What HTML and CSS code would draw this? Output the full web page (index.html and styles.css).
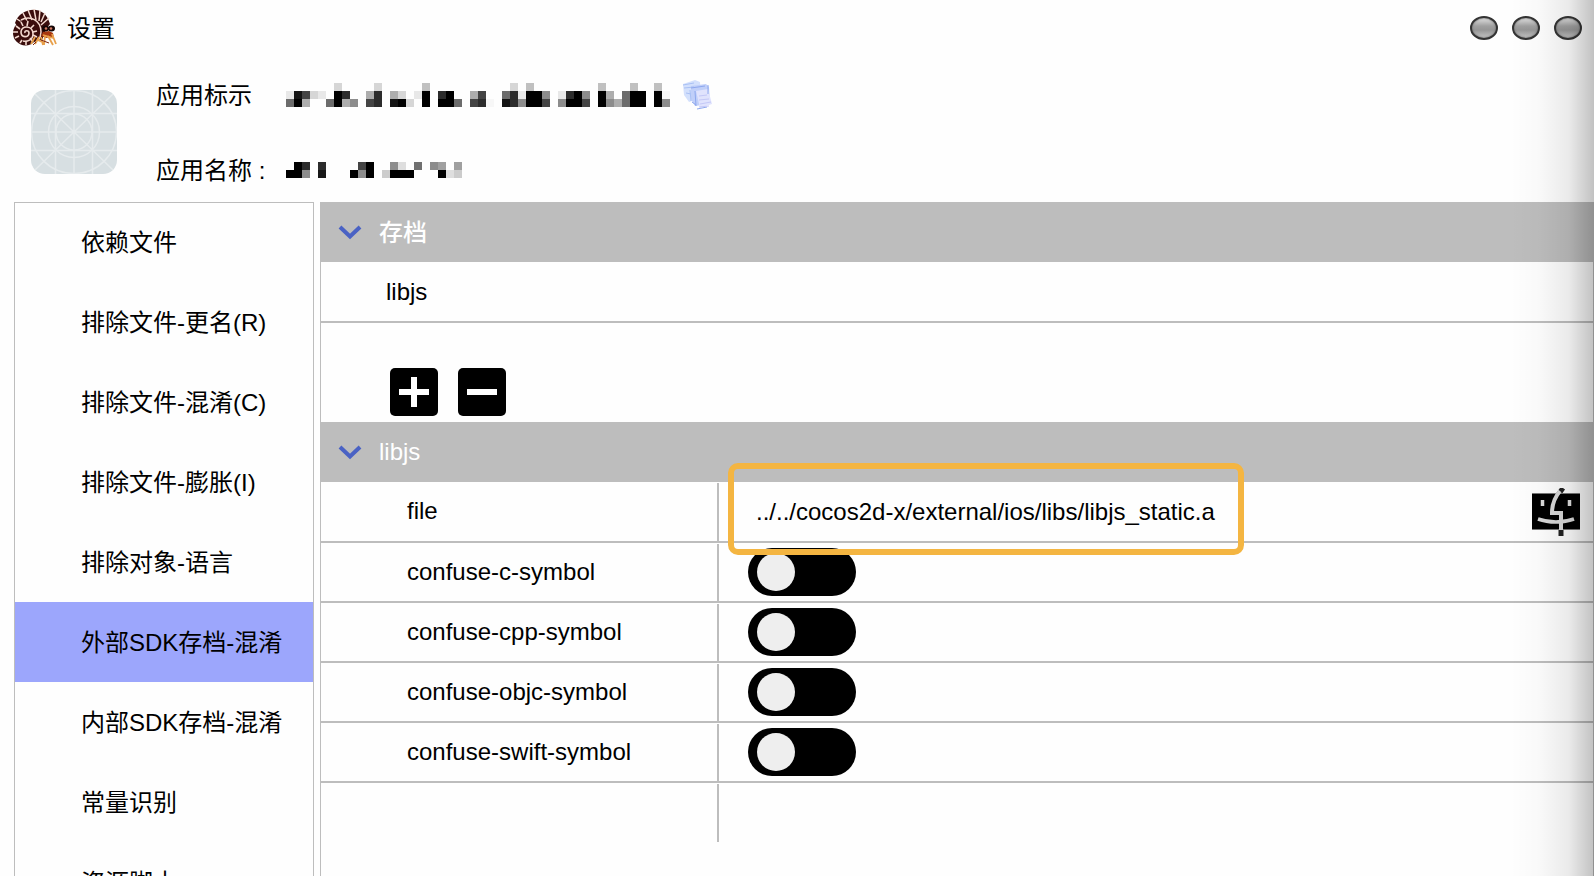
FILE: index.html
```html
<!DOCTYPE html>
<html lang="zh-CN">
<head>
<meta charset="utf-8">
<title>设置</title>
<meta name="viewport" content="width=device-width, initial-scale=1">
<link rel="stylesheet" href="styles.css">
</head>
<body>
<div class="window">
  <header class="titlebar">
    <svg class="logo" viewBox="0 0 44 38" aria-hidden="true">
      <path d="M2 14C5 5 14 0 23 1c8 1 12 7 14 14l-4 5-4 11-12 3z" fill="#3a0d0c"/>
      <g stroke="#f3d9cf" stroke-width="1.5" fill="none">
        <path d="M10 4l4 8M15 1l4 10M21 0l2 11M27 1l-1 11M32 4l-4 9M36 9l-8 7M4 10l6 4"/>
        <path d="M8 11c9-5 20 0 20 12 0 3-1 6-3 9"/>
      </g>
      <circle cx="12.500" cy="24" r="12.500" fill="#3a0d0c"/>
      <g stroke="#f3d9cf" stroke-width="1.600" fill="none">
        <path d="M12 24c-1-3 4-3 4 0 0 5-8 5-8-1 0-7 12-7 12 2 0 6-6 8-10 7"/>
        <path d="M3 17l4 3M8 13l2 4M15 12l-1 5M21 16l-3 3M24 22l-4 1M24 28l-4-2M20 33l-3-4M13 36v-4M7 34l2-3M2 29l4-2M0 23h5"/>
      </g>
      <path d="M30 23l6-1 4 2 1 5-4-1-4 1-5-2z" fill="#a8380f"/>
      <path d="M22 28l-4 7M26 28l-4 7M28 28l2 8M32 27l-1 9M35 27l5 9M39 25l4 10M25 31l6 3M30 26l10 3" stroke="#e8a04a" stroke-width="1.800" fill="none"/>
      <path d="M20 36l3-3M28 31l8 3" stroke="#7d2510" stroke-width="1"/>
      <ellipse cx="32.500" cy="19.500" rx="3.500" ry="3" fill="#140505"/>
      <ellipse cx="38.500" cy="19.500" rx="3.500" ry="3" fill="#140505"/>
      <circle cx="33" cy="19.500" r="1.300" fill="#d07a62"/>
      <circle cx="38" cy="19.500" r="1.300" fill="#d07a62"/>
    </svg>
    <h1 class="title">设置</h1>
    <div class="window-controls">
      <button class="orb" type="button" aria-label="最小化"></button>
      <button class="orb" type="button" aria-label="最大化"></button>
      <button class="orb" type="button" aria-label="关闭"></button>
    </div>
  </header>

  <section class="app-info">
    <svg class="app-icon" viewBox="0 0 86 84" aria-hidden="true">
      <rect width="86" height="84" rx="14" fill="#d7dfe2"/>
      <g fill="none" stroke="#e6ebed" stroke-width="1.500">
        <path d="M24.500 0v84M43 0v84M61.500 0v84M0 23.500h86M0 42h86M0 60.500h86M4 4l78 76M82 4L4 80"/>
        <ellipse cx="43" cy="42" rx="42.500" ry="41.500"/>
        <circle cx="43" cy="42" r="25.500"/>
        <circle cx="43" cy="42" r="18"/>
      </g>
    </svg>
    <dl class="fields">
      <div class="field">
        <dt class="field-name">应用标示</dt>
        <dd class="field-value">
          <svg class="mask mask-id" viewBox="0 0 48 3" shape-rendering="crispEdges" aria-hidden="true">
            <path fill="#000" d="M1 2h1v1h-1zM6 1h1v2h-1zM14 2h1v1h-1zM17 1h1v2h-1zM20 1h1v1h-1zM19 2h2v1h-2zM30 1h2v2h-2zM36 1h1v2h-1zM35 2h1v1h-1zM39 1h1v2h-1zM43 1h2v2h-2zM46 1h1v2h-1z"/>
            <path fill="#141414" d="M1 1h1v1h-1zM13 2h1v1h-1zM27 2h1v1h-1z"/>
            <path fill="#2c2c2c" d="M7 1h1v1h-1zM11 1h1v2h-1zM19 1h1v1h-1zM24 2h1v1h-1zM28 1h1v2h-1zM35 1h1v1h-1z"/>
            <path fill="#444" d="M2 1h1v1h-1zM10 2h1v1h-1zM24 1h1v1h-1zM23 2h1v1h-1zM32 2h1v1h-1zM37 2h1v1h-1z"/>
            <path fill="#6c6c6c" d="M0 2h1v1h-1zM5 2h1v1h-1zM21 2h1v1h-1zM27 1h1v1h-1zM42 1h1v2h-1z"/>
            <path fill="#8c8c8c" d="M8 2h1v1h-1zM32 1h1v1h-1zM34 2h1v1h-1zM37 1h1v1h-1zM40 2h1v1h-1zM29 2h1v1h-1zM47 2h1v1h-1z"/>
            <path fill="#adadad" d="M2 2h1v1h-1zM7 2h1v1h-1zM10 1h1v1h-1zM13 1h1v1h-1zM23 1h1v1h-1zM40 1h1v1h-1zM41 2h1v1h-1z"/>
            <path fill="#c0c0c0" d="M17 0h1v1h-1zM30 0h1v1h-1zM39 0h1v1h-1zM43 0h1v1h-1zM46 0h1v1h-1z"/>
            <path fill="#d6d6d6" d="M6 0h1v1h-1zM11 0h1v1h-1zM28 0h1v1h-1zM3 1h1v1h-1zM14 1h1v1h-1zM15 2h1v1h-1z"/>
            <path fill="#e8e8e8" d="M0 1h1v1h-1zM4 1h1v1h-1zM16 1h1v1h-1zM29 1h1v1h-1zM34 1h1v1h-1z"/>
            <path fill="#f7f7f7" d="M25 2h1v1h-1zM47 1h1v1h-1z"/>
          </svg>
          <button class="copy" type="button" aria-label="复制">
            <svg viewBox="0 0 30 30" aria-hidden="true">
              <path d="M0 4l12-4 5 2 1 16-12 4-5-7z" fill="#d3e0fc"/>
              <path d="M8 6l15-2 3 3 1 17-15 2-4-7z" fill="#c0cff9"/>
              <path d="M0 5l11-2M1 8l10-1M3 13l5 1M7 10l1 11" stroke="#a9c0f4" fill="none"/>
              <path d="M13 11l12-2 4 15-12 4z" fill="#e0e3fd"/>
              <path d="M8 8l14-2M12 11l1 15M9 22l4 3M25 5v9M14 29l10-2" stroke="#8ea8ee" fill="none"/>
              <path d="M16 16l8-1M16 20l10-1M17 24l11-2M16 27l10-1" stroke="#c4c8f7" fill="none"/>
            </svg>
          </button>
        </dd>
      </div>
      <div class="field">
        <dt class="field-name">应用名称 :</dt>
        <dd class="field-value">
          <svg class="mask mask-name" viewBox="0 0 22 2" shape-rendering="crispEdges" aria-hidden="true">
            <path fill="#000" d="M1 0h1v2h-1zM0 1h1v1h-1zM8 1h1v1h-1zM10 0h1v2h-1zM13 1h3v1h-3zM19 1h1v1h-1z"/>
            <path fill="#2c2c2c" d="M2 0h1v1h-1zM4 0h1v1h-1z"/>
            <path fill="#181818" d="M4 1h1v1h-1z"/>
            <path fill="#444" d="M9 0h1v1h-1z"/>
            <path fill="#707070" d="M16 0h1v1h-1z"/>
            <path fill="#8c8c8c" d="M2 1h1v1h-1zM9 1h1v1h-1zM13 0h1v1h-1zM18 0h1v1h-1z"/>
            <path fill="#a0a0a0" d="M19 0h1v1h-1zM21 0h1v1h-1z"/>
            <path fill="#ccc" d="M12 1h1v1h-1zM21 1h1v1h-1z"/>
            <path fill="#dedede" d="M14 0h1v1h-1zM20 1h1v1h-1z"/>
          </svg>
        </dd>
      </div>
    </dl>
  </section>

  <main class="content">
    <nav class="sidebar">
      <a class="nav-item" href="#deps">依赖文件</a>
      <a class="nav-item" href="#rename">排除文件-更名(R)</a>
      <a class="nav-item" href="#confuse">排除文件-混淆(C)</a>
      <a class="nav-item" href="#inflate">排除文件-膨胀(I)</a>
      <a class="nav-item" href="#language">排除对象-语言</a>
      <a class="nav-item selected" href="#external" aria-current="page">外部SDK存档-混淆</a>
      <a class="nav-item" href="#internal">内部SDK存档-混淆</a>
      <a class="nav-item" href="#constants">常量识别</a>
      <a class="nav-item" href="#scripts">资源脚本</a>
    </nav>

    <div class="panel">
      <button class="section-head" type="button" aria-expanded="true">
        <svg class="chevron" viewBox="0 0 24 16" aria-hidden="true"><path d="M2 3l10 9.500L22 3"/></svg>
        <span class="section-title">存档</span>
      </button>
      <div class="archive">libjs</div>
      <div class="archive-actions">
        <button class="square" type="button" aria-label="添加">
          <svg viewBox="0 0 48 48" aria-hidden="true"><path d="M9 24h30M24 9v30"/></svg>
        </button>
        <button class="square" type="button" aria-label="移除">
          <svg viewBox="0 0 48 48" aria-hidden="true"><path d="M9 24h30"/></svg>
        </button>
      </div>

      <button class="section-head" type="button" aria-expanded="true">
        <svg class="chevron" viewBox="0 0 24 16" aria-hidden="true"><path d="M2 3l10 9.500L22 3"/></svg>
        <span>libjs</span>
      </button>
      <div class="row file-row">
        <label class="row-name" for="file">file</label>
        <div class="row-value">
          <div class="path">
            <input class="path-input" id="file" type="text" value="../../cocos2d-x/external/ios/libs/libjs_static.a">
          </div>
          <button class="finder" type="button" aria-label="选择文件">
            <svg viewBox="0 0 48 48" aria-hidden="true">
              <path d="M31 0l-5 7M29 41v7" stroke="#222" stroke-width="5" fill="none"/>
              <rect y="5" width="48" height="37" fill="#000"/>
              <path d="M0 5.500h48M0 41.500h48" stroke="#777" stroke-width="1"/>
              <path d="M28 3c-5 6-8 13-8 22h9v17" stroke="#d8d8d8" stroke-width="4" fill="none"/>
              <path d="M6 31c11 4 25 4 36 0" stroke="#d8d8d8" stroke-width="3.500" fill="none"/>
              <path d="M10.500 12v6M37.500 12v6" stroke="#ddd" stroke-width="3.500"/>
            </svg>
          </button>
        </div>
      </div>
      <div class="row">
        <label class="row-name" for="c">confuse-c-symbol</label>
        <div class="row-value"><input class="toggle" id="c" type="checkbox"></div>
      </div>
      <div class="row">
        <label class="row-name" for="cpp">confuse-cpp-symbol</label>
        <div class="row-value"><input class="toggle" id="cpp" type="checkbox"></div>
      </div>
      <div class="row">
        <label class="row-name" for="objc">confuse-objc-symbol</label>
        <div class="row-value"><input class="toggle" id="objc" type="checkbox"></div>
      </div>
      <div class="row">
        <label class="row-name" for="swift">confuse-swift-symbol</label>
        <div class="row-value"><input class="toggle" id="swift" type="checkbox"></div>
      </div>
      <div class="row empty-row"><div class="row-name"></div></div>
    </div>
  </main>
  <div class="edge-shade"></div>
</div>
</body>
</html>
```

FILE: styles.css
```css
* {
  box-sizing: border-box;
}

body {
  margin: 0;
  color: #000;
  background: #fefefe;
  font: 24px/32px "Liberation Sans", "Noto Sans CJK SC", sans-serif;
}

button,
input {
  margin: 0;
  padding: 0;
  border: 0;
  background: none;
  color: inherit;
  font: inherit;
}

svg {
  display: block;
}

.window {
  position: relative;
  display: flex;
  flex-direction: column;
  height: 100vh;
  overflow: hidden;
}

/* Title bar */

.titlebar {
  display: flex;
  align-items: center;
  flex: none;
  height: 56px;
  padding: 0 12px 0 13px;
}

.logo {
  width: 44px;
  height: 38px;
  margin-right: 10px;
}

.title {
  margin: 0;
  padding-top: 2px;
  font-size: 24px;
  font-weight: 400;
}

.window-controls {
  display: flex;
  gap: 14px;
  margin-left: auto;
}

.orb {
  width: 28px;
  height: 24px;
  border: 2px solid #333;
  border-radius: 50%;
  background: linear-gradient(#e0e0e0, #a0a0a0 40%, #969696 60%, #c4c4c4);
  box-shadow: inset 0 0 2px #555;
}

/* Application summary */

.app-info {
  display: flex;
  flex: none;
  height: 146px;
  padding: 0 31px;
}

.app-icon {
  flex: none;
  width: 86px;
  height: 84px;
  margin: 34px 39px 0 0;
}

.fields {
  display: flex;
  flex-direction: column;
  gap: 43px;
  margin: 23px 0 0;
}

.field {
  display: flex;
  align-items: center;
  height: 32px;
}

.field-name {
  width: 130px;
  padding-top: 2px;
}

.field-value {
  display: flex;
  align-items: center;
  gap: 13px;
  margin: 0;
}

.mask-id {
  width: 384px;
  height: 24px;
}

.mask-name {
  width: 176px;
  height: 16px;
}

.copy {
  width: 30px;
  height: 30px;
}

/* Navigation */

.content {
  display: flex;
  flex: 1;
  gap: 6px;
  min-height: 0;
  padding-left: 14px;
}

.sidebar {
  flex: none;
  width: 300px;
  padding: 0 1px;
  overflow: hidden;
  box-shadow: inset 0 1px #bdbdbd, inset 1px 0 #bdbdbd, inset -1px 0 #bdbdbd;
}

.nav-item {
  display: flex;
  align-items: center;
  height: 80px;
  padding: 2px 0 0 66px;
  color: inherit;
  text-decoration: none;
  white-space: nowrap;
}

.selected {
  background: #9ca6fc;
}

/* Settings panel */

.panel {
  flex: 1;
  min-width: 0;
  padding: 0 1px;
  box-shadow: inset 1px 0 #bdbdbd, inset -1px 0 #bdbdbd;
}

.section-head {
  display: flex;
  align-items: center;
  gap: 17px;
  width: 100%;
  height: 60px;
  padding-left: 17px;
  background: #bdbdbd;
  box-shadow: -1px 0 #bdbdbd, 1px 0 #bdbdbd;
  color: #fff;
}

.section-title {
  padding-top: 2px;
  font-weight: 500;
}

.chevron {
  width: 24px;
  height: 16px;
  fill: none;
  stroke: #4a62c4;
  stroke-width: 4;
}

.archive {
  display: flex;
  align-items: center;
  height: 61px;
  padding-left: 65px;
  border-bottom: 2px solid #bdbdbd;
}

.archive-actions {
  display: flex;
  align-items: flex-end;
  gap: 20px;
  height: 99px;
  padding: 0 0 6px 69px;
}

.square {
  width: 48px;
  height: 48px;
  border-radius: 5px;
  background: #000;
}

.square svg {
  fill: none;
  stroke: #fff;
  stroke-width: 6;
}

.row {
  display: flex;
  height: 60px;
  border-bottom: 2px solid #bdbdbd;
}

.file-row {
  height: 61px;
}

.empty-row {
  height: 59px;
  border-bottom: 0;
}

.row-name {
  display: flex;
  align-items: center;
  flex: none;
  width: 398px;
  margin-top: 1px;
  padding: 0 0 2px 86px;
  border-right: 2px solid #bdbdbd;
}

.row-value {
  display: flex;
  align-items: center;
  flex: 1;
  min-width: 0;
  padding: 0 13px 0 29px;
}

/* The highlight frame overlaps the rows above and below the path. */
.path {
  position: relative;
  width: 496px;
  padding-left: 8px;
}

.path::after {
  content: "";
  position: absolute;
  inset: -33px 0 -27px -20px;
  border: 6px solid #f4b541;
  border-radius: 10px;
  pointer-events: none;
  z-index: 1;
}

.path-input {
  display: block;
  width: 100%;
  height: 32px;
}

.finder {
  width: 48px;
  height: 48px;
  margin-left: auto;
}

.toggle {
  appearance: none;
  width: 108px;
  height: 48px;
  padding: 5px 9px;
  border-radius: 24px;
  background: #000;
}

.toggle::before {
  content: "";
  display: block;
  width: 38px;
  height: 38px;
  border-radius: 50%;
  background: #eee;
}

.toggle:checked::before {
  margin-left: auto;
}

/* Shade along the right edge of the window */
.edge-shade {
  position: absolute;
  inset: 0 0 0 auto;
  width: 84px;
  background: linear-gradient(to right, rgba(0, 0, 0, 0), rgba(0, 0, 0, 0.02) 35%, rgba(0, 0, 0, 0.08) 70%, rgba(0, 0, 0, 0.24));
  pointer-events: none;
}
```
